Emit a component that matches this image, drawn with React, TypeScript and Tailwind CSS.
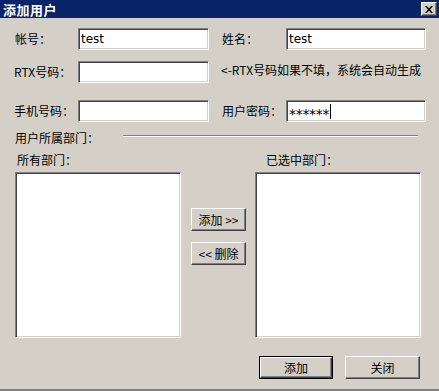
const font = "font-['SimSun','Noto_Sans_CJK_SC',sans-serif]";

function TextBox({ value, w, caret }: { value?: string; w: string; caret?: boolean }) {
  return (
    <div
      className={`${w} h-[22px] bg-white border border-t-[#808080] border-l-[#808080] border-r-white border-b-white shadow-[inset_1px_1px_0_#404040,inset_-1px_-1px_0_#d4d0c8] flex items-center pl-[2px] text-[12px] text-black font-['DejaVu_Sans','Liberation_Sans',sans-serif] leading-none`}
    >
      <span className={caret ? "text-[14px] tracking-[-0.3px] mt-[5px]" : "-mt-[1px]"}>{value}</span>
      {caret && <span className="w-[1px] h-[15px] bg-black ml-[1px]" />}
    </div>
  );
}

function Btn({ children, w, h, def }: { children: React.ReactNode; w: string; h: string; def?: boolean }) {
  return (
    <div className={`${w} ${h} ${def ? "border border-black" : ""} flex`}>
      <div className="flex-1 flex items-center justify-center bg-[#d4d0c8] border border-t-white border-l-white border-r-[#404040] border-b-[#404040] shadow-[inset_-1px_-1px_0_#808080] text-[12px] text-black">
        {children}
      </div>
    </div>
  );
}

function ListBox() {
  return (
    <div className="w-[166px] h-[166px] bg-white border border-t-[#808080] border-l-[#808080] border-r-white border-b-white shadow-[inset_1px_1px_0_#404040,inset_-1px_-1px_0_#d4d0c8]" />
  );
}

export default function App() {
  return (
    <div className={`w-[439px] h-[391px] bg-[#d4d0c8] flex flex-col ${font} text-[12px] text-black leading-none overflow-hidden`}>
      {/* title bar */}
      <div className="h-[18px] bg-[#0a246a] flex items-center justify-between pl-[3px] pr-[2px]">
        <span className="text-white font-bold text-[13px] tracking-[0.5px]">添加用户</span>
        <div className="w-[16px] h-[14px] flex items-center justify-center bg-[#d4d0c8] border border-t-white border-l-white border-r-[#404040] border-b-[#404040] shadow-[inset_-1px_-1px_0_#808080]">
          <svg width="8" height="7" viewBox="0 0 8 7">
            <path d="M0 0h2l2 2.5L6 0h2L5 3.5 8 7H6L4 4.5 2 7H0l3-3.5z" fill="#000" />
          </svg>
        </div>
      </div>

      <div className="flex-1 flex flex-col pl-[14px] border-b-2 border-b-[#808080]">
        {/* row 1 */}
        <div className="flex items-center mt-[10px]">
          <span className="w-[64px] pl-[1px]">帐号：</span>
          <TextBox value="test" w="w-[131px]" />
          <span className="w-[64px] ml-[13px]">姓名：</span>
          <TextBox value="test" w="w-[140px]" />
        </div>

        {/* row 2 */}
        <div className="flex items-center mt-[11px]">
          <span className="w-[64px]">RTX号码：</span>
          <TextBox w="w-[131px]" />
          <span className="ml-[12px] -mt-[4px]">&lt;-RTX号码如果不填，系统会自动生成</span>
        </div>

        {/* row 3 */}
        <div className="flex items-center mt-[17px]">
          <span className="w-[64px]">手机号码：</span>
          <TextBox w="w-[131px]" />
          <span className="w-[64px] ml-[13px]">用户密码：</span>
          <TextBox value="******" w="w-[140px]" caret />
        </div>

        {/* row 4 */}
        <div className="flex items-center mt-[8px] h-[16px]">
          <span className="w-[109px] pl-[1px]">用户所属部门：</span>
          <div className="w-[295px] -mt-[5px] h-[2px] border-t border-t-[#808080] border-b border-b-white" />
        </div>

        {/* lists */}
        <div className="flex mt-[6px] pl-[1px]">
          <div className="flex flex-col">
            <span className="pl-[2px] h-[16px] flex items-center mb-[4px]">所有部门：</span>
            <ListBox />
          </div>
          <div className="flex flex-col gap-[11px] ml-[10px] mt-[56px]">
            <Btn w="w-[55px]" h="h-[23px]">添加 &gt;&gt;</Btn>
            <Btn w="w-[55px]" h="h-[23px]">&lt;&lt; 删除</Btn>
          </div>
          <div className="flex flex-col ml-[9px]">
            <span className="pl-[11px] h-[16px] flex items-center mb-[4px]">已选中部门：</span>
            <ListBox />
          </div>
        </div>

        {/* bottom buttons */}
        <div className="flex justify-end gap-[12px] mt-[18px] pr-[19px]">
          <Btn w="w-[74px]" h="h-[23px]" def>添加</Btn>
          <Btn w="w-[75px]" h="h-[23px]">关闭</Btn>
        </div>
      </div>
    </div>
  );
}
